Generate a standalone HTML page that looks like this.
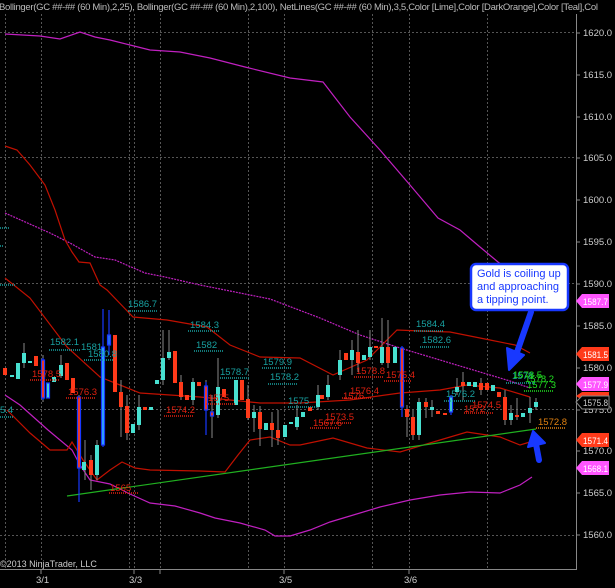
<!DOCTYPE html>
<html><head><meta charset="utf-8"><style>
html,body{margin:0;padding:0;background:#000;width:615px;height:588px;overflow:hidden}
svg{display:block}
text{font-family:"Liberation Sans",Arial,sans-serif}
</style></head><body>
<svg width="615" height="588" viewBox="0 0 615 588" xmlns="http://www.w3.org/2000/svg">
<rect width="615" height="588" fill="#000"/>
<g stroke="#555" stroke-width="1" stroke-dasharray="2,2" fill="none">
<line x1="5.5" y1="14" x2="5.5" y2="569"/><line x1="41.5" y1="14" x2="41.5" y2="569"/>
<line x1="129.5" y1="14" x2="129.5" y2="569"/><line x1="134.5" y1="14" x2="134.5" y2="569"/>
<line x1="160.5" y1="14" x2="160.5" y2="569"/><line x1="248.5" y1="14" x2="248.5" y2="569"/>
<line x1="284.5" y1="14" x2="284.5" y2="569"/><line x1="372.5" y1="14" x2="372.5" y2="569"/>
<line x1="409.5" y1="14" x2="409.5" y2="569"/><line x1="487.5" y1="14" x2="487.5" y2="569"/>
<line x1="0" y1="32.5" x2="576" y2="32.5"/><line x1="0" y1="157.5" x2="576" y2="157.5"/>
<line x1="0" y1="283.5" x2="576" y2="283.5"/><line x1="0" y1="409.5" x2="576" y2="409.5"/>
<line x1="0" y1="535.5" x2="576" y2="535.5"/>
</g>
<g stroke="#888" stroke-width="1">
<line x1="576.5" y1="14" x2="576.5" y2="570"/><line x1="0" y1="569.5" x2="577" y2="569.5"/>
<line x1="576" y1="33" x2="580" y2="33"/><line x1="576" y1="75" x2="580" y2="75"/><line x1="576" y1="117" x2="580" y2="117"/><line x1="576" y1="158" x2="580" y2="158"/><line x1="576" y1="200" x2="580" y2="200"/><line x1="576" y1="242" x2="580" y2="242"/><line x1="576" y1="284" x2="580" y2="284"/><line x1="576" y1="326" x2="580" y2="326"/><line x1="576" y1="368" x2="580" y2="368"/><line x1="576" y1="410" x2="580" y2="410"/><line x1="576" y1="451" x2="580" y2="451"/><line x1="576" y1="493" x2="580" y2="493"/><line x1="576" y1="535" x2="580" y2="535"/>
<line x1="41" y1="569" x2="41" y2="574"/><line x1="134" y1="569" x2="134" y2="574"/><line x1="160" y1="569" x2="160" y2="574"/><line x1="284" y1="569" x2="284" y2="574"/><line x1="409" y1="569" x2="409" y2="574"/>
</g>
<g fill="#ccc" font-size="9.5">
<text x="583" y="36">1620.0</text><text x="583" y="78">1615.0</text><text x="583" y="120">1610.0</text><text x="583" y="161">1605.0</text><text x="583" y="203">1600.0</text><text x="583" y="245">1595.0</text><text x="583" y="287">1590.0</text><text x="583" y="329">1585.0</text><text x="583" y="371">1580.0</text><text x="583" y="413">1575.0</text><text x="583" y="454">1570.0</text><text x="583" y="496">1565.0</text><text x="583" y="538">1560.0</text>
<text x="36" y="583">3/1</text><text x="129" y="583">3/3</text><text x="279" y="583">3/5</text><text x="404" y="583">3/6</text>
<text x="0" y="567" font-size="9">©2013 NinjaTrader, LLC</text>
</g>
<text x="-1" y="10" fill="#bbb" font-size="9.5" letter-spacing="-0.3">Bollinger(GC ##-## (60 Min),2,25), Bollinger(GC ##-## (60 Min),2,100), NetLines(GC ##-## (60 Min),3,5,Color [Lime],Color [DarkOrange],Color [Teal],Col</text>
<g fill="none" stroke-width="1.2">
<polyline stroke="#c020c0" points="5,34 40,36 60,39 80,32 95,37 110,40 130,45 150,50 180,52 210,58 245,67 290,78 323,82 350,117 380,150 410,185 438,218 460,230 480,247 498,262 515,275 530,288"/>
<polyline stroke="#c020c0" stroke-dasharray="2,1" points="5,213 50,233 70,243 95,257 115,260 145,273 165,277 200,285 270,299 320,318 360,335 400,348 440,360 480,372 510,381 530,388"/>
<polyline stroke="#c020c0" points="5,395 20,405 48,430 72,450 80,465 90,480 110,484 130,494 150,503 175,506 200,513 215,518 240,523 265,530 275,536 290,536 310,530 330,522 350,516 380,507 410,500 440,495 470,492 500,493 520,485 532,477"/>
<polyline stroke="#c01000" points="5,146 17,150 30,165 45,185 55,210 65,240 72,252 79,262 90,263 100,285 107,290 133,317 167,320 207,327 230,345 260,357 300,358 333,375 367,360 397,330 420,331 450,332 490,340 515,345 530,353"/>
<polyline stroke="#c01000" points="5,278 30,298 67,347 100,377 140,393 200,397 260,403 300,403 350,400 400,393 440,390 467,385 500,388 530,397"/>
<polyline stroke="#c01000" points="7,410 30,433 50,450 67,450 72,442 83,460 97,480 110,470 122,462 135,468 150,470 200,471 225,472 238,455 250,440 270,437 290,445 300,445 333,438 367,448 400,452 440,440 467,432 500,437 520,445 530,442"/>
<line x1="67" y1="496" x2="536" y2="429" stroke="#20b020"/>
</g>
<g stroke="#888" stroke-width="1">
<line x1="24" y1="343" x2="24" y2="368"/><line x1="43" y1="355" x2="43" y2="402"/><line x1="61" y1="355" x2="61" y2="378"/>
<line x1="79" y1="395" x2="79" y2="502"/><line x1="85" y1="440" x2="85" y2="480"/><line x1="91" y1="455" x2="91" y2="490"/><line x1="97" y1="440" x2="97" y2="480"/>
<line x1="103" y1="309" x2="103" y2="445"/><line x1="109" y1="310" x2="109" y2="350"/><line x1="121" y1="380" x2="121" y2="437"/><line x1="127" y1="395" x2="127" y2="440"/><line x1="139" y1="395" x2="139" y2="430"/>
<line x1="163" y1="330" x2="163" y2="385"/><line x1="169" y1="330" x2="169" y2="360"/><line x1="181" y1="375" x2="181" y2="400"/><line x1="193" y1="378" x2="193" y2="405"/>
<line x1="218" y1="358" x2="218" y2="418"/><line x1="206" y1="380" x2="206" y2="413"/><line x1="212" y1="395" x2="212" y2="438"/>
<line x1="248" y1="385" x2="248" y2="420"/><line x1="254" y1="405" x2="254" y2="432"/><line x1="260" y1="406" x2="260" y2="446"/><line x1="272" y1="412" x2="272" y2="447"/><line x1="278" y1="410" x2="278" y2="445"/>
<line x1="297" y1="405" x2="297" y2="430"/><line x1="318" y1="385" x2="318" y2="410"/><line x1="328" y1="375" x2="328" y2="400"/><line x1="340" y1="350" x2="340" y2="380"/><line x1="352" y1="340" x2="352" y2="375"/><line x1="358" y1="330" x2="358" y2="372"/><line x1="370" y1="330" x2="370" y2="360"/><line x1="382" y1="318" x2="382" y2="365"/><line x1="388" y1="320" x2="388" y2="368"/>
<line x1="407" y1="405" x2="407" y2="437"/><line x1="413" y1="410" x2="413" y2="440"/><line x1="419" y1="398" x2="419" y2="440"/><line x1="426" y1="398" x2="426" y2="418"/><line x1="432" y1="400" x2="432" y2="417"/>
<line x1="457" y1="378" x2="457" y2="395"/><line x1="463" y1="372" x2="463" y2="400"/><line x1="481" y1="378" x2="481" y2="395"/><line x1="505" y1="390" x2="505" y2="425"/><line x1="511" y1="405" x2="511" y2="425"/><line x1="517" y1="398" x2="517" y2="420"/><line x1="530" y1="397" x2="530" y2="423"/><line x1="536" y1="398" x2="536" y2="410"/>
</g>
<g fill="#ff3a1a">
<rect x="3" y="368" width="4" height="7"/><rect x="34" y="356" width="4" height="10"/><rect x="65" y="363" width="4" height="17"/><rect x="71" y="378" width="4" height="15"/><rect x="77" y="397" width="4" height="71"/><rect x="89" y="460" width="4" height="15"/>
<rect x="113" y="335" width="4" height="57"/><rect x="119" y="392" width="4" height="15"/><rect x="125" y="406" width="4" height="27"/><rect x="143" y="407" width="4" height="3"/>
<rect x="173" y="351" width="4" height="32"/><rect x="179" y="382" width="4" height="15"/><rect x="185" y="395" width="4" height="5"/><rect x="197" y="382" width="4" height="4"/><rect x="210" y="412" width="4" height="4"/><rect x="222" y="389" width="4" height="8"/>
<rect x="240" y="380" width="4" height="20"/><rect x="246" y="399" width="4" height="19"/><rect x="258" y="412" width="4" height="17"/><rect x="270" y="423" width="4" height="7"/><rect x="276" y="430" width="4" height="8"/>
<rect x="308" y="407" width="4" height="4"/><rect x="320" y="395" width="4" height="4"/><rect x="344" y="353" width="4" height="7"/><rect x="356" y="352" width="4" height="11"/><rect x="374" y="346" width="4" height="2"/><rect x="386" y="347" width="4" height="16"/>
<rect x="400" y="348" width="4" height="59"/><rect x="405" y="409" width="4" height="8"/><rect x="411" y="417" width="4" height="18"/><rect x="424" y="402" width="4" height="5"/><rect x="436" y="411" width="4" height="3"/><rect x="443" y="413" width="4" height="2"/>
<rect x="461" y="382" width="4" height="4"/><rect x="479" y="383" width="4" height="7"/><rect x="485" y="383" width="4" height="7"/><rect x="497" y="392" width="4" height="5"/><rect x="503" y="397" width="4" height="23"/><rect x="515" y="415" width="4" height="2"/>
</g>
<g fill="#48e0d0">
<rect x="16" y="363" width="4" height="16"/><rect x="22" y="353" width="4" height="10"/><rect x="28" y="361" width="4" height="2"/><rect x="10" y="375" width="4" height="2"/><rect x="52" y="377" width="4" height="5"/><rect x="59" y="365" width="4" height="11"/>
<rect x="82" y="462" width="4" height="8"/><rect x="95" y="445" width="4" height="30"/><rect x="131" y="424" width="4" height="9"/><rect x="137" y="407" width="4" height="18"/><rect x="149" y="407" width="4" height="3"/>
<rect x="155" y="380" width="4" height="4"/><rect x="161" y="358" width="4" height="22"/><rect x="167" y="352" width="4" height="6"/><rect x="191" y="382" width="4" height="18"/><rect x="216" y="387" width="4" height="28"/><rect x="234" y="380" width="4" height="25"/>
<rect x="252" y="412" width="4" height="6"/><rect x="264" y="423" width="4" height="7"/><rect x="283" y="425" width="4" height="12"/><rect x="289" y="422" width="4" height="2"/><rect x="295" y="417" width="4" height="10"/><rect x="301" y="412" width="4" height="5"/>
<rect x="316" y="395" width="4" height="12"/><rect x="326" y="385" width="4" height="12"/><rect x="338" y="360" width="4" height="15"/><rect x="350" y="350" width="4" height="10"/><rect x="362" y="355" width="4" height="5"/><rect x="368" y="347" width="4" height="10"/><rect x="380" y="347" width="4" height="16"/><rect x="393" y="347" width="4" height="16"/>
<rect x="417" y="402" width="4" height="33"/><rect x="430" y="407" width="4" height="3"/><rect x="455" y="387" width="4" height="5"/><rect x="467" y="382" width="4" height="4"/><rect x="473" y="382" width="4" height="5"/><rect x="491" y="385" width="4" height="6"/><rect x="509" y="413" width="4" height="7"/><rect x="521" y="413" width="4" height="4"/><rect x="528" y="408" width="4" height="5"/><rect x="534" y="402" width="4" height="5"/>
</g>
<g stroke="#1838ff" stroke-width="1.2">
<line x1="43" y1="358" x2="43" y2="400"/><rect x="41.5" y="360" width="3" height="38" fill="#ff3a1a"/>
<rect x="46.5" y="383" width="3" height="15" fill="#48e0d0"/>
<line x1="79" y1="397" x2="79" y2="502"/><rect x="77.5" y="397" width="3" height="71" fill="#ff3a1a"/>
<line x1="103" y1="309" x2="103" y2="447"/><rect x="101.5" y="347" width="3" height="98" fill="#30a8ff"/>
<rect x="107.5" y="335" width="3" height="10" fill="#48e0d0"/><line x1="109" y1="310" x2="109" y2="355"/>
<line x1="206" y1="382" x2="206" y2="435"/><rect x="204.5" y="386" width="3" height="24" fill="#ff3a1a"/>
<rect x="210.5" y="412" width="3" height="4" fill="#ff3a1a"/>
<line x1="402" y1="346" x2="402" y2="417"/><rect x="400.5" y="348" width="3" height="59" fill="#ff3a1a"/>
<line x1="451" y1="395" x2="451" y2="415"/><rect x="449.5" y="397" width="3" height="15" fill="#48e0d0"/>
</g>
<g font-size="9.5">
<g fill="#18a0a0">
<text x="128" y="307">1586.7</text><text x="50" y="345">1582.1</text><text x="81" y="350">1581</text><text x="88" y="357">1580.8</text><text x="190" y="328">1584.3</text><text x="196" y="348">1582</text><text x="263" y="365">1579.9</text><text x="220" y="375">1578.7</text><text x="270" y="380">1578.2</text><text x="288" y="404">1575</text><text x="416" y="327">1584.4</text><text x="422" y="343">1582.6</text><text x="446" y="397">1576.2</text><text x="512" y="379">1578</text><text x="0" y="413">5.4</text>
</g>
<g fill="#e02010">
<text x="32" y="377">1578.5</text><text x="68" y="395">1576.3</text><text x="166" y="413">1574.2</text><text x="208" y="401">1575</text><text x="356" y="374">1578.8</text><text x="386" y="378">1575.4</text><text x="350" y="394">1576.4</text><text x="343" y="399">1576</text><text x="325" y="420">1573.5</text><text x="313" y="426">1567.6</text><text x="472" y="408">1574.5</text><text x="464" y="412">1572</text><text x="110" y="491">1565</text>
</g>
<g fill="#20e020"><text x="513" y="378">1578.5</text><text x="525" y="382">1578.2</text><text x="527" y="388">1577.3</text></g>
<text x="538" y="425" fill="#e08010">1572.8</text>
</g>
<g stroke-dasharray="1,1" stroke-width="1.5">
<g stroke="#18a0a0">
<line x1="128" y1="311" x2="157" y2="311"/><line x1="49" y1="350" x2="80" y2="350"/><line x1="84" y1="360" x2="114" y2="360"/><line x1="188" y1="331" x2="219" y2="331"/><line x1="194" y1="351" x2="224" y2="351"/><line x1="262" y1="368" x2="291" y2="368"/><line x1="220" y1="378" x2="250" y2="378"/><line x1="268" y1="384" x2="297" y2="384"/><line x1="288" y1="407" x2="318" y2="407"/><line x1="414" y1="331" x2="443" y2="331"/><line x1="420" y1="347" x2="450" y2="347"/><line x1="444" y1="401" x2="475" y2="401"/><line x1="506" y1="383" x2="535" y2="383"/><line x1="0" y1="228" x2="10" y2="228"/><line x1="0" y1="246" x2="4" y2="246"/><line x1="0" y1="285" x2="15" y2="285"/><line x1="0" y1="417" x2="14" y2="417"/>
</g>
<g stroke="#e02010">
<line x1="30" y1="380" x2="60" y2="380"/><line x1="66" y1="398" x2="96" y2="398"/><line x1="164" y1="416" x2="194" y2="416"/><line x1="206" y1="404" x2="236" y2="404"/><line x1="354" y1="377" x2="384" y2="377"/><line x1="384" y1="381" x2="412" y2="381"/><line x1="342" y1="398" x2="372" y2="398"/><line x1="322" y1="423" x2="352" y2="423"/><line x1="310" y1="428" x2="340" y2="428"/><line x1="464" y1="413" x2="494" y2="413"/><line x1="109" y1="493" x2="139" y2="493"/>
</g>
<line x1="524" y1="391" x2="553" y2="391" stroke="#20e020"/>
<line x1="536" y1="428" x2="565" y2="428" stroke="#e08010"/>
</g>
<g font-size="9">
<path d="M576,301 L582,294 L609,294 L609,308 L582,308 Z" fill="#ff55ff"/><text x="583" y="305" fill="#fff" textLength="25" lengthAdjust="spacingAndGlyphs">1587.7</text>
<path d="M576,354 L582,347 L609,347 L609,361 L582,361 Z" fill="#ff3a1a"/><text x="583" y="358" fill="#fff" textLength="25" lengthAdjust="spacingAndGlyphs">1581.5</text>
<path d="M576,384 L582,377 L609,377 L609,391 L582,391 Z" fill="#ff55ff"/><text x="583" y="388" fill="#fff" textLength="25" lengthAdjust="spacingAndGlyphs">1577.9</text>
<path d="M576,396 L582,392 L609,392 L609,400 L582,400 Z" fill="#ff3a1a"/>
<path d="M576,402 L582,396 L609,396 L609,409 L582,409 Z" fill="#000" stroke="#888"/><text x="583" y="406" fill="#ccc" textLength="25" lengthAdjust="spacingAndGlyphs">1575.8</text>
<path d="M576,440 L582,433 L609,433 L609,447 L582,447 Z" fill="#ff3a1a"/><text x="583" y="444" fill="#fff" textLength="25" lengthAdjust="spacingAndGlyphs">1571.4</text>
<path d="M576,468 L582,461 L609,461 L609,475 L582,475 Z" fill="#ff55ff"/><text x="583" y="472" fill="#fff" textLength="25" lengthAdjust="spacingAndGlyphs">1568.1</text>
</g>
<rect x="471" y="264" width="97" height="46" rx="5" fill="#fff" stroke="#1838ff" stroke-width="2.5"/>
<g fill="#1838ff" font-size="11"><text x="477" y="277">Gold is coiling up</text><text x="477" y="290">and approaching</text><text x="477" y="303">a tipping point.</text></g>
<g fill="#1838ff" stroke="#1838ff" stroke-linecap="round">
<line x1="531" y1="312" x2="516" y2="355" stroke-width="6"/>
<path d="M507,348 L509,370 L524,355 Z" stroke-width="2" stroke-linejoin="round"/>
<line x1="539" y1="460" x2="536" y2="444" stroke-width="6"/>
<path d="M528,447 L533,431 L545,443 Z" stroke-width="2" stroke-linejoin="round"/>
</g>
</svg>
</body></html>
